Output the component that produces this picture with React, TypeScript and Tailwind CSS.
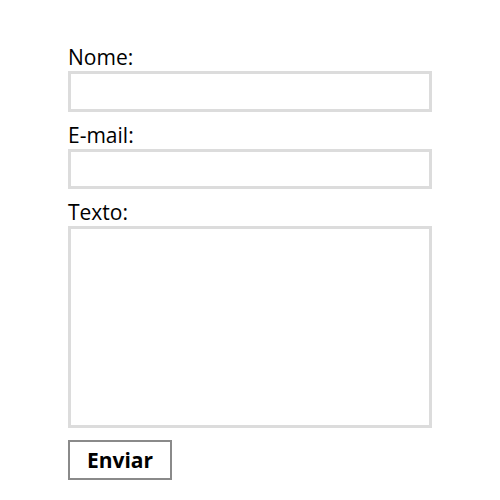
import React from "react";

export default function App() {
  return (
    <div className="w-[500px] h-[500px] bg-white" style={{ fontFamily: '"Open Sans", sans-serif' }}>
      <form className="pt-[43px] pl-[68px] w-[432px] flex flex-col text-black">
        <label className="text-[21px] leading-[28px]">Nome:</label>
        <input className="h-[41px] w-[364px] border-[3px] border-[#dcdcdc] outline-none" />
        <label className="mt-[9px] text-[21px] leading-[28px]">E-mail:</label>
        <input className="h-[40px] w-[364px] border-[3px] border-[#dcdcdc] outline-none" />
        <label className="mt-[9px] text-[21px] leading-[28px]">Texto:</label>
        <textarea className="h-[202px] w-[364px] border-[3px] border-[#dcdcdc] outline-none resize-none" />
        <div className="mt-[12px]">
          <button type="button" className="w-[104px] h-[40px] border-2 border-[#8a8a8a] bg-white text-[21px] font-bold leading-none">
            Enviar
          </button>
        </div>
      </form>
    </div>
  );
}
